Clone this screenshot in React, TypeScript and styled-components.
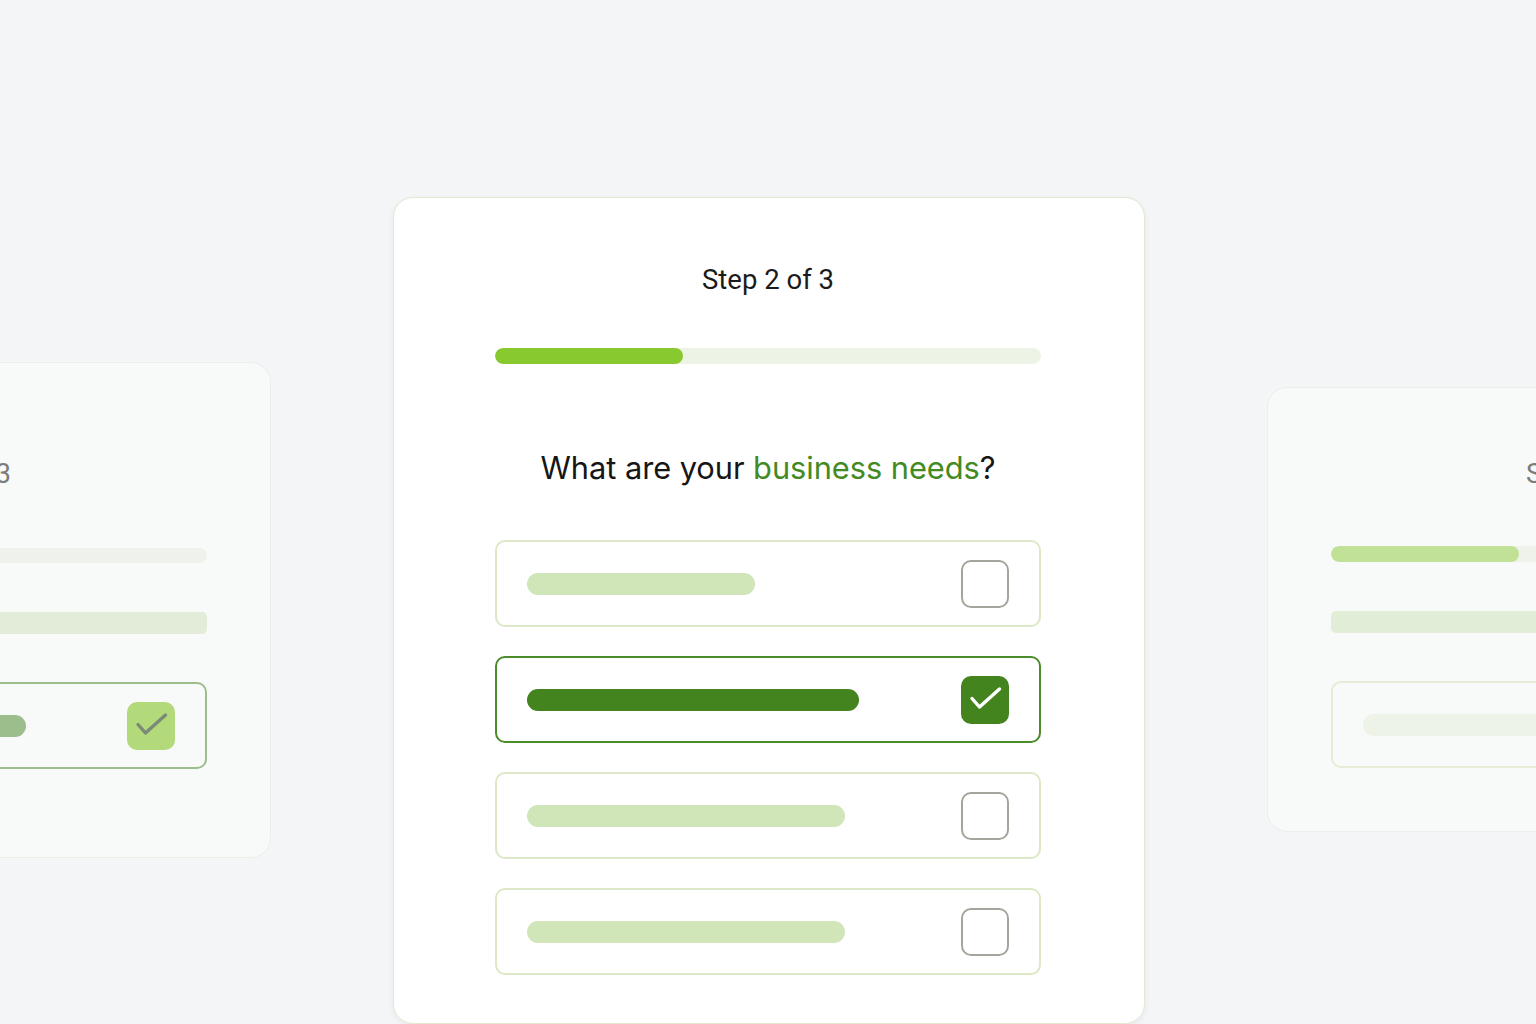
import React from "react";
import styled, { createGlobalStyle } from "styled-components";

const Global = createGlobalStyle`
  html, body { margin: 0; padding: 0; background: #f3f5f7; }
  body { font-family: Inter, "Liberation Sans", sans-serif; }
  #root { height: 1024px; }
`;

const Stage = styled.div`
  width: 1536px;
  height: 1024px;
  overflow: hidden;
  display: flex;
  justify-content: center;
  align-items: flex-start;
  background: #f3f5f7;
`;

const Card = styled.section<{ $w: number; $h: number; $top: number; $ghost?: boolean; $pad: number; $padR?: number; $gap?: number }>`
  flex: 0 0 auto;
  box-sizing: border-box;
  width: ${(p) => p.$w}px;
  height: ${(p) => p.$h}px;
  margin-top: ${(p) => p.$top}px;
  margin-left: ${(p) => p.$gap ?? 0}px;
  padding: 0 ${(p) => p.$padR ?? p.$pad}px 0 ${(p) => p.$pad}px;
  border-radius: 20px;
  background: ${(p) => (p.$ghost ? "#f8f9f9" : "#ffffff")};
  border: 1px solid ${(p) => (p.$ghost ? "#eceee8" : "#e2e9cf")};
  box-shadow: ${(p) => (p.$ghost ? "none" : "0 2px 6px rgba(40, 50, 60, 0.06)")};
  display: flex;
  flex-direction: column;
  align-items: stretch;
`;

const StepLabel = styled.div<{ $ghost?: boolean; $mt: number }>`
  margin-top: ${(p) => p.$mt}px;
  text-align: center;
  font-family: Roboto, "Liberation Sans", sans-serif;
  font-size: 27.5px;
  line-height: 32px;
  color: ${(p) => (p.$ghost ? "#7a7d7a" : "#1b1b1b")};
  white-space: nowrap;
`;

const Track = styled.div<{ $mt: number; $bg: string; $h?: number }>`
  margin-top: ${(p) => p.$mt}px;
  height: ${(p) => p.$h ?? 16}px;
  border-radius: 999px;
  background: ${(p) => p.$bg};
  display: flex;
  overflow: hidden;
`;

const Fill = styled.div<{ $w: number; $bg: string }>`
  width: ${(p) => p.$w}px;
  height: 100%;
  border-radius: 999px;
  background: ${(p) => p.$bg};
`;

const Heading = styled.h2`
  margin: 86px 0 0;
  text-align: center;
  font-family: Inter, "Liberation Sans", sans-serif;
  font-weight: 400;
  font-size: 30.8px;
  line-height: 36px;
  color: #161616;
  letter-spacing: -0.05px;
`;

const Accent = styled.span`
  color: #438a22;
`;

const GhostBar = styled.div<{ $mt: number; $bg: string }>`
  margin-top: ${(p) => p.$mt}px;
  height: 22px;
  border-radius: 5px;
  background: ${(p) => p.$bg};
`;

const Options = styled.div<{ $mt: number }>`
  margin-top: ${(p) => p.$mt}px;
  display: flex;
  flex-direction: column;
  gap: 29px;
`;

const Option = styled.div<{ $border: string; $bg?: string }>`
  box-sizing: border-box;
  height: 87px;
  border: 2px solid ${(p) => p.$border};
  border-radius: 10px;
  background: ${(p) => p.$bg ?? "#ffffff"};
  display: flex;
  align-items: center;
  justify-content: space-between;
  padding: 0 30px 0 30px;
`;

const Line = styled.div<{ $w: number; $bg: string }>`
  width: ${(p) => p.$w}px;
  height: 22px;
  border-radius: 999px;
  background: ${(p) => p.$bg};
`;

const Box = styled.div<{ $checked?: boolean; $fill?: string }>`
  box-sizing: border-box;
  width: 48px;
  height: 48px;
  border-radius: 10px;
  border: ${(p) => (p.$checked ? "none" : "2px solid #a4a69e")};
  background: ${(p) => (p.$checked ? p.$fill ?? "#43841f" : "#ffffff")};
  display: flex;
  align-items: center;
  justify-content: center;
  flex: 0 0 auto;
`;

const Check = ({ color }: { color: string }) => (
  <svg width="48" height="48" viewBox="0 0 48 48" fill="none">
    <path d="M11 22.5 L18.5 31 L38.5 13" stroke={color} strokeWidth="3.4" strokeLinecap="round" strokeLinejoin="round" />
  </svg>
);

const GhostOption = styled(Option)`
  background: transparent;
`;

const StartOption = styled(GhostOption)`
  justify-content: flex-start;
`;

export default function App() {
  const options = [
    { w: 228, checked: false },
    { w: 332, checked: true },
    { w: 318, checked: false },
    { w: 318, checked: false },
  ];
  return (
    <>
      <Global />
      <Stage>
        <Card $w={652} $h={496} $top={362} $ghost $pad={63}>
          <StepLabel $ghost $mt={95}>Step 1 of 3</StepLabel>
          <Track $mt={58} $bg="#eff2ec" $h={15} />
          <GhostBar $mt={49} $bg="#e3ecd9" />
          <Options $mt={48}>
            <GhostOption $border="#9cbe8d">
              <Line $w={311} $bg="#9cbd8c" />
              <Box $checked $fill="#b3da7a">
                <Check color="#7b8a76" />
              </Box>
            </GhostOption>
          </Options>
        </Card>

        <Card $w={752} $h={827} $top={197} $pad={101} $padR={103} $gap={122}>
          <StepLabel $mt={66}>Step 2 of 3</StepLabel>
          <Track $mt={52} $bg="#edf4e5">
            <Fill $w={188} $bg="#88c930" />
          </Track>
          <Heading>
            What are your <Accent>business needs</Accent>?
          </Heading>
          <Options $mt={54}>
            {options.map((o, i) => (
              <Option key={i} $border={o.checked ? "#4a8b2a" : "#dde8c6"}>
                <Line $w={o.w} $bg={o.checked ? "#43841f" : "#d0e5b8"} />
                <Box $checked={o.checked}>{o.checked && <Check color="#ffffff" />}</Box>
              </Option>
            ))}
          </Options>
        </Card>

        <Card $w={650} $h={445} $top={387} $ghost $pad={63} $gap={122}>
          <StepLabel $ghost $mt={70}>Step 3 of 3</StepLabel>
          <Track $mt={56} $bg="#eef2ea">
            <Fill $w={188} $bg="#c0e196" />
          </Track>
          <GhostBar $mt={49} $bg="#e2edd8" />
          <Options $mt={48}>
            <StartOption $border="#e6ecd6">
              <Line $w={400} $bg="#edf3e7" />
            </StartOption>
          </Options>
        </Card>
      </Stage>
    </>
  );
}
